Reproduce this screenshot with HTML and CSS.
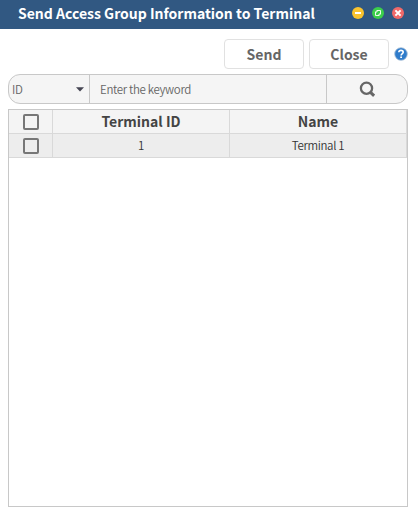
FILE: index.html
```html
<!DOCTYPE html>
<html lang="en">
<head>
<meta charset="utf-8">
<title>Send Access Group Information to Terminal</title>
<link rel="stylesheet" href="styles.css">
</head>
<body>
<div class="window">
  <header class="titlebar">
    <h1>Send Access Group Information to Terminal</h1>
    <div class="controls">
      <svg width="12" height="12" viewBox="0 0 12 12"><circle cx="6" cy="6" r="6" fill="#fac32e"/><path d="M3 6h6" stroke="#fff" stroke-width="2"/></svg>
      <svg width="12" height="12" viewBox="0 0 12 12"><circle cx="6" cy="6" r="6" fill="#3bcf4b"/><path d="M5 3.500h3.500V7M3.500 5v3.500H7M5 3v2H3M9 7H7v2" fill="none" stroke="#fff" stroke-width=".9"/></svg>
      <svg width="12" height="12" viewBox="0 0 12 12"><circle cx="6" cy="6" r="6" fill="#f06969"/><path d="M3.400 3.400l5.200 5.200M8.600 3.400L3.400 8.600" stroke="#fff" stroke-width="2"/></svg>
    </div>
  </header>
  <div class="actions">
    <button class="btn">Send</button>
    <button class="btn">Close</button>
    <svg class="help" width="14" height="14" viewBox="0 0 14 14"><circle cx="7" cy="7" r="6.300" fill="#2f7ccb" stroke="#a9bfd6" stroke-width=".8"/><path d="M4.800 5.300C4.900 3.900 5.800 3.400 7 3.400s2.200.7 2.200 1.800C9.200 6.500 7.100 6.600 7.100 8.500" fill="none" stroke="#fff" stroke-width="1.600"/><path d="M6.200 9.400h1.800v1.700H6.200z" fill="#fff"/></svg>
  </div>
  <div class="search">
    <div class="field">ID<svg width="8" height="5" viewBox="0 0 8 5"><path d="M0 .3h8L4 4.600z" fill="#454552"/></svg></div>
    <div class="keyword">Enter the keyword</div>
    <div class="go"><svg width="16" height="16" viewBox="0 0 16 16"><circle cx="7.500" cy="7.200" r="5.600" fill="none" stroke="#666" stroke-width="2.300"/><path d="M11.200 11.200l3.900 3.600" stroke="#666" stroke-width="3"/></svg></div>
  </div>
  <div class="grid">
    <div class="row head"><div><i class="check"></i></div><div>Terminal ID</div><div>Name</div></div>
    <div class="row"><div><i class="check"></i></div><div>1</div><div>Terminal 1</div></div>
  </div>
</div>
</body>
</html>
```
FILE: styles.css
```css
* { box-sizing: border-box; }
body {
  margin: 0;
  background: #fff;
  font-family: "Noto Sans CJK KR", "Noto Sans", sans-serif;
  color: #444;
}
.window { height: 515px; display: flex; flex-direction: column; }
.titlebar {
  height: 29px;
  background: #315882;
  display: flex;
  justify-content: space-between;
  align-items: center;
  padding: 0 14px 3px 18px;
}
.titlebar h1 { margin: 0; font-size: 14px; line-height: 26px; font-weight: 700; color: #fff; white-space: nowrap; }
.controls { display: flex; gap: 8px; }
.actions { display: flex; justify-content: flex-end; align-items: center; gap: 5px; padding: 10px 10px 0 0; }
.btn {
  width: 80px;
  height: 30px;
  padding: 0;
  border: 1px solid #e1e1e1;
  border-radius: 4px;
  background: #fff;
  font: 700 14px/28px "Noto Sans CJK KR", "Noto Sans", sans-serif;
  color: #666;
}
.search {
  margin: 5px 10px 0 8px;
  height: 30px;
  border: 1px solid #c8c8c8;
  border-radius: 12px;
  background: #f5f5f5;
  display: flex;
  font-size: 11.5px;
  font-weight: 350;
  letter-spacing: -.33px;
  line-height: 29px;
  color: #666;
}
.field { width: 81px; padding: 0 5px 0 3px; display: flex; justify-content: space-between; align-items: center; border-right: 1px solid #c8c8c8; }
.keyword { flex: 1; padding-left: 10px; }
.go { width: 81px; border-left: 1px solid #c8c8c8; display: flex; justify-content: center; align-items: center; }
.grid { margin: 5px 10px 8px 8px; flex: 1; border: 1px solid #c8c8c8; }
.row {
  display: grid;
  grid-template-columns: 44px 177px 177px;
  height: 24px;
  background: #ededed;
  font-size: 11.5px;
  font-weight: 350;
  letter-spacing: -.33px;
  line-height: 23px;
  text-align: center;
  color: #333;
}
.row > div { border-right: 1px solid #d9d9d9; border-bottom: 1px solid #d9d9d9; }
.row > div:first-child { display: flex; align-items: center; justify-content: center; }
.row.head { background: #f4f4f4; font-size: 14px; letter-spacing: 0; line-height: 22px; font-weight: 700; color: #444; }
.check { width: 16px; height: 16px; border: 2px solid #777; border-radius: 2px; }
```
